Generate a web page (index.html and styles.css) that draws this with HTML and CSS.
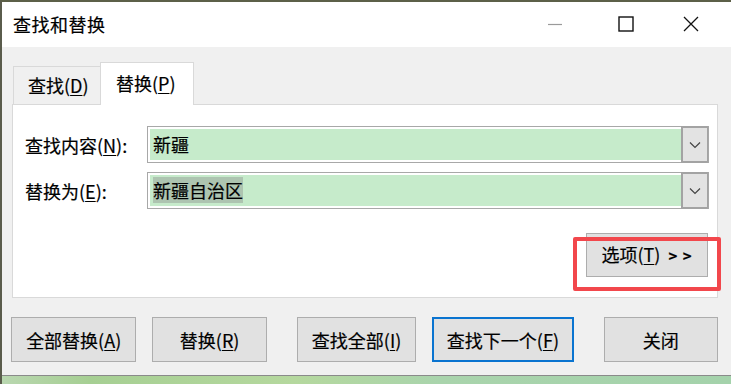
FILE: index.html
```html
<!DOCTYPE html>
<html lang="zh-CN">
<head>
<meta charset="utf-8">
<title>查找和替换</title>
<link rel="stylesheet" href="styles.css">
</head>
<body>
<div class="window">
  <div class="titlebar">
    <span class="title">查找和替换</span>
    <div class="controls">
      <span class="ctl ctl-min"><svg width="16" height="16" viewBox="0 0 16 16"><path d="M1 8.5H15" stroke="#9a9a9a" stroke-width="1.2"/></svg></span>
      <span class="ctl ctl-max"><svg width="16" height="16" viewBox="0 0 16 16"><rect x="1" y="1" width="14" height="14" fill="none" stroke="#111" stroke-width="1.4"/></svg></span>
      <span class="ctl ctl-close"><svg width="16" height="16" viewBox="0 0 16 16"><path d="M1 1L15 15M15 1L1 15" stroke="#111" stroke-width="1.3"/></svg></span>
    </div>
  </div>
  <div class="content">
    <div class="tabs">
      <div class="tab">查找(<u>D</u>)</div>
      <div class="tab tab-active">替换(<u>P</u>)</div>
    </div>
    <div class="panel">
      <div class="field-row">
        <span class="label">查找内容(<u>N</u>):</span>
        <div class="combo">
          <div class="combo-text">新疆</div>
          <div class="combo-drop"><svg width="12" height="8" viewBox="0 0 12 8"><path d="M1 1.5L6 6.5L11 1.5" fill="none" stroke="#444" stroke-width="1.2"/></svg></div>
        </div>
      </div>
      <div class="field-row">
        <span class="label">替换为(<u>E</u>):</span>
        <div class="combo">
          <div class="combo-text"><span class="sel">新疆自治区</span></div>
          <div class="combo-drop"><svg width="12" height="8" viewBox="0 0 12 8"><path d="M1 1.5L6 6.5L11 1.5" fill="none" stroke="#444" stroke-width="1.2"/></svg></div>
        </div>
      </div>
      <div class="options-row">
        <div class="options-wrap">
          <button class="btn btn-options">选项(<u>T</u>)&nbsp;<span class="arrows">&gt; &gt;</span></button>
          <span class="mark"></span>
        </div>
      </div>
    </div>
    <div class="actions">
      <button class="btn b1">全部替换(<u>A</u>)</button>
      <button class="btn b2">替换(<u>R</u>)</button>
      <button class="btn b3 wide-gap">查找全部(<u>I</u>)</button>
      <button class="btn b4 btn-default">查找下一个(<u>F</u>)</button>
      <button class="btn b5 wide-gap">关闭</button>
    </div>
  </div>
  <div class="desktop"></div>
</div>
</body>
</html>
```

FILE: styles.css
```css
* { box-sizing: border-box; }
html, body {
  margin: 0;
  padding: 0;
  width: 731px;
  height: 384px;
  overflow: hidden;
  font-family: "Noto Sans CJK SC", "Noto Sans", sans-serif;
  color: #000;
}
.window {
  width: 731px;
  height: 384px;
  display: flex;
  flex-direction: column;
  border-left: 2px solid #5a5c4c;
  border-top: 2px solid #5c6048;
  background: #fff;
  -webkit-text-stroke: 0.2px #000;
}
.titlebar {
  height: 45px;
  flex: none;
  display: flex;
  align-items: center;
  justify-content: space-between;
  padding-left: 11px;
  background: #fff;
}
.title {
  font-size: 18px;
  line-height: 20px;
  letter-spacing: 0.5px;
  margin-top: -2px;
}
.controls {
  display: flex;
  align-items: center;
  height: 100%;
  margin-right: 8px;
}
.ctl {
  width: 65px;
  height: 100%;
  display: flex;
  align-items: center;
  justify-content: center;
}
.ctl svg { display: block; margin-top: -2px; }
.ctl-min svg { margin-right: 12px; }
.content {
  flex: none;
  height: 329px;
  background: #f0f0f0;
  padding: 15px 13px 13px 10px;
  border-bottom: 1px solid #8a8a8a;
  display: flex;
  flex-direction: column;
}
.tabs {
  display: flex;
  align-items: flex-end;
  height: 42px;
  padding-left: 1px;
  position: relative;
  z-index: 1;
}
.tab {
  height: 38px;
  padding: 0 0 0 14px;
  width: 87px;
  border: 1px solid #d9d9d9;
  border-bottom: none;
  border-right: none;
  background: #f0f0f0;
  font-size: 18px;
  line-height: 36px;
  white-space: nowrap;
}
.tab-active {
  height: 43px;
  width: 94px;
  margin-bottom: -1px;
  background: #fff;
  border-right: 1px solid #d9d9d9;
  padding-left: 15px;
  line-height: 40px;
}
.panel {
  height: 194px;
  background: #fff;
  border: 1px solid #d9d9d9;
  padding: 21px 8px 20px 12px;
  display: flex;
  flex-direction: column;
  gap: 9px;
}
.field-row {
  display: flex;
  align-items: center;
  height: 37px;
}
.label {
  width: 122px;
  flex: none;
  font-size: 18px;
  line-height: 22px;
  white-space: nowrap;
}
.combo {
  flex: 1;
  height: 37px;
  display: flex;
  border: 1px solid #a8a8a8;
  padding: 2px 0 2px 2px;
  background: #fff;
}
.combo-text {
  flex: 1;
  background: #c6ebcb;
  font-size: 18px;
  line-height: 31px;
  padding-left: 3px;
}
.sel { background: #adc4b0; }
.combo-drop {
  width: 27px;
  margin-top: -3px;
  margin-bottom: -3px;
  border: 2px solid #a3a3a3;
  border-right-width: 1px;
  background: #e3e3e3;
  display: flex;
  align-items: center;
  justify-content: center;
}
.combo-drop svg { display: block; }
.options-row {
  display: flex;
  justify-content: flex-end;
  margin-top: 15px;
  padding-right: 1px;
}
.options-wrap { position: relative; }
.btn {
  font-family: inherit;
  font-size: 18px;
  color: #000;
  background: #e1e1e1;
  border: 1px solid #adadad;
  height: 45px;
  padding: 0;
  line-height: 22px;
  border-radius: 0;
  white-space: nowrap;
}
.btn-options {
  display: block;
  width: 122px;
  height: 44px;
  text-align: center;
}
.arrows {
  font-size: 15px;
  font-weight: bold;
  letter-spacing: 1px;
  margin-left: 4px;
}
.mark {
  position: absolute;
  left: -13px;
  top: 4px;
  right: -13px;
  bottom: -14px;
  border: 4px solid #f2474c;
  border-radius: 2px;
  pointer-events: none;
}
.actions {
  display: flex;
  margin-top: 19px;
  margin-left: -1px;
  gap: 16px;
}
.b1 { width: 126px; }
.b2 { width: 115px; }
.b3 { width: 120px; }
.b4 { width: 142px; }
.b5 { width: 115px; }
.wide-gap { margin-left: 14px; }
.btn-default { border: 2px solid #0a74d0; }
.desktop {
  flex: 1;
  background: linear-gradient(90deg, #b9d7b0 0%, #a6cf93 12%, #b5d89e 40%, #a9d4ac 60%, #a4d2ab 100%);
}
u { text-decoration-thickness: 1px; text-underline-offset: 2px; }
```
